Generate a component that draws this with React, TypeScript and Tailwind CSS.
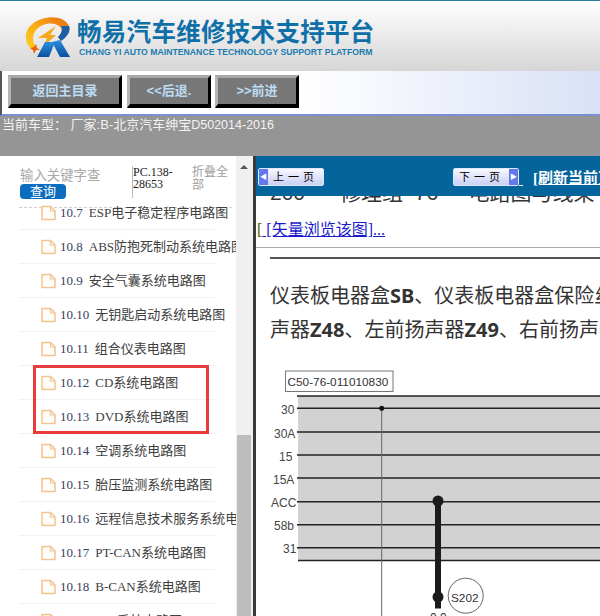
import React from 'react'

const cjk = "font-['Liberation_Sans','Noto_Sans_CJK_SC',sans-serif]"
const serif = "font-['Liberation_Serif','Noto_Sans_CJK_SC',serif]"

const items = [
  ['10.7', 'ESP电子稳定程序电路图'],
  ['10.8', 'ABS防抱死制动系统电路图'],
  ['10.9', '安全气囊系统电路图'],
  ['10.10', '无钥匙启动系统电路图'],
  ['10.11', '组合仪表电路图'],
  ['10.12', 'CD系统电路图'],
  ['10.13', 'DVD系统电路图'],
  ['10.14', '空调系统电路图'],
  ['10.15', '胎压监测系统电路图'],
  ['10.16', '远程信息技术服务系统电路图'],
  ['10.17', 'PT-CAN系统电路图'],
  ['10.18', 'B-CAN系统电路图'],
  ['10.19', 'LIN系统电路图'],
]

const Logo = () => (
  <svg width="50" height="46" viewBox="0 0 50 46" className="shrink-0">
    <defs>
      <linearGradient id="ring" x1="0" y1="1" x2="1" y2="0">
        <stop offset="0" stopColor="#ffd21f" />
        <stop offset="0.5" stopColor="#f9a916" />
        <stop offset="1" stopColor="#ea6a0e" />
      </linearGradient>
      <linearGradient id="blue" x1="0" y1="0" x2="0" y2="1">
        <stop offset="0" stopColor="#2a8fe0" />
        <stop offset="1" stopColor="#0d4f9e" />
      </linearGradient>
    </defs>
    <path d="M7 33C-3 24-1 9 14 3C26-2 40 0 44 9C46 14 42 20 36 24L33 20C37 16 38 12 34 9C27 4 16 7 11 13C7 18 7 25 11 30Z" fill="url(#ring)" />
    <path d="M44 9C46 14 42 20 36 24L33 20C37 16 38 12 36 9Z" fill="#1a5fa8" />
    <path d="M13 21L31 9L25 18L31 18L19 29L22 21Z" fill="#f7a81b" />
    <path d="M5 31L9 30L11 27L12 31L15 33L11 33L9 37L8 33Z" fill="#e8620c" />
    <path d="M12 40L20 25L30 25L24 40Z" fill="url(#blue)" />
    <path d="M27 25L35 23L45 40L35 40Z" fill="url(#blue)" />
  </svg>
)

const NavButton = ({ label, className }: { label: string; className: string }) => (
  <button className={`h-[33px] bg-[#777777] border-[3px] border-t-[#a8a8a8] border-l-[#b4b4b4] border-r-black border-b-[4px] border-b-black text-[13px] font-bold text-[#bcdcf4] ${cjk} ${className}`}>
    {label}
  </button>
)

const Pager = ({ label, next }: { label: string; next?: boolean }) => (
  <div className={`h-[18px] w-[66px] shrink-0 flex items-center rounded-[2px] border border-[#dce8fb] bg-gradient-to-b from-[#f8f8ff] to-[#c9d0f5] ${next ? 'flex-row-reverse' : ''}`}>
    <span className="w-[9px] h-full bg-[#6478ee] text-white text-[7px] leading-[16px] text-center">{next ? '▶' : '◀'}</span>
    <span className={`flex-1 text-center text-[11px] tracking-[4px] text-black ${cjk}`}>{label}</span>
  </div>
)

const FileIcon = () => (
  <svg width="15" height="16" viewBox="0 0 15 16" fill="none" className="shrink-0">
    <path d="M1 1.5H9.5L14 6V14.5H1Z" fill="#fffdf8" stroke="#f2c48f" strokeWidth="1.5" strokeLinejoin="round" />
    <path d="M9.5 1.5V6H14" stroke="#f2c48f" strokeWidth="1.2" />
  </svg>
)

const Row = ({ num, title }: { num: string; title: string }) => (
  <div className={`h-[34px] ml-[19px] w-[196px] shrink-0 flex items-center border-b border-[#f2f2f2] pl-[22px] text-[13px] whitespace-nowrap ${serif}`}>
    <FileIcon />
    <span className="ml-[4px] text-[#38405c]">{num}</span>
    <span className="ml-[6px] text-[#404040]">{title}</span>
  </div>
)

const rails = [
  ['30', 48.3, 21],
  ['30A', 72, 14],
  ['15', 95, 19],
  ['15A', 118, 13],
  ['ACC', 141.7, 11],
  ['58b', 164.7, 14],
  ['31', 187.7, 23],
] as const

const Diagram = () => (
  <svg width="340" height="256" viewBox="0 0 340 256" className="block">
    <rect x="25.5" y="11" width="107.5" height="20.5" fill="white" stroke="#777" />
    <text x="27.5" y="26" fontSize="11.8" fill="#333" fontFamily="Liberation Sans">C50-76-011010830</text>
    <rect x="38" y="36" width="302" height="165" fill="#d2d2d2" />
    <line x1="37" y1="36" x2="340" y2="36" stroke="#222" strokeWidth="1.5" />
    <line x1="38" y1="200.5" x2="340" y2="200.5" stroke="#222" strokeWidth="1.5" />
    {rails.map(([label, y, x]) => (
      <g key={label}>
        <line x1="37" y1={y} x2="340" y2={y} stroke="#222" strokeWidth="1.5" />
        <text x={x} y={y + 5.5} fontSize="12" fill="#444" fontFamily="Liberation Sans">{label}</text>
      </g>
    ))}
    <line x1="121.7" y1="48" x2="121.7" y2="256" stroke="#666" strokeWidth="1" />
    <circle cx="121.7" cy="48.3" r="2.5" fill="#111" />
    <line x1="178" y1="141" x2="178" y2="248.5" stroke="#1c1c1c" strokeWidth="6" />
    <circle cx="178" cy="141" r="5.5" fill="#1c1c1c" />
    <circle cx="178" cy="237" r="5.5" fill="#1c1c1c" />
    <circle cx="205.7" cy="235.7" r="17.5" fill="white" stroke="#666" />
    <text x="191" y="241.5" fontSize="11.8" fill="#333" fontFamily="Liberation Sans">S202</text>
    <text x="170" y="261.5" fontSize="12" fill="#333" fontFamily="Liberation Sans">0.0</text>
  </svg>
)

export default function App() {
  return (
    <div className={`relative w-[600px] h-[616px] overflow-hidden bg-white flex flex-col ${cjk}`}>
      {/* logo strip */}
      <header className="h-[71px] shrink-0 border-t border-[#2b7ea6] bg-gradient-to-b from-white to-[#d6d6d6] flex items-start pl-[25px] pt-[16px]">
        <Logo />
        <div className="ml-[2px] mt-[1px]">
          <div className="text-[24.5px] leading-[29px] font-bold text-[#0f70a8] tracking-[0.3px] whitespace-nowrap">畅易汽车维修技术支持平台</div>
          <div className="text-[8.7px] leading-[11px] font-bold text-[#1a7cb0] whitespace-nowrap ml-[2px]">CHANG YI AUTO MAINTENANCE TECHNOLOGY SUPPORT PLATFORM</div>
        </div>
      </header>

      {/* nav */}
      <nav className="h-[45px] shrink-0 border-b-2 border-[#7d8fd0] border-l-2 border-l-[#555] bg-gradient-to-r from-white from-50% to-[#d9e1f6] flex items-start pl-[6px] pt-[4px]">
        <NavButton label="返回主目录" className="w-[114px]" />
        <NavButton label="<<后退." className="w-[84px] ml-[5px]" />
        <NavButton label=">>前进" className="w-[84px] ml-[4px]" />
      </nav>

      <div className="h-[40px] shrink-0 bg-[#959595] pl-[2px] text-[13px] leading-[18px] text-[#f2f2f2] whitespace-nowrap">当前车型： 厂家:B-北京汽车绅宝<span className="text-[12.5px]">D502014-2016</span></div>

      <main className="flex-1 flex min-h-0">
        {/* sidebar */}
        <aside className="w-[236px] shrink-0 flex flex-col overflow-hidden">
          <div className="h-[52px] shrink-0 flex border-b border-dashed border-[#cfcfcf] mr-[4px] ml-[19px]">
            <div className="w-[113px] pt-[12px] pl-[1px]">
              <div className="text-[13.4px] leading-[16px] text-[#a8a8a8] whitespace-nowrap">输入关键字查</div>
              <div className="w-[46px] h-[15px] rounded-[4px] bg-[#0b6cc0] text-white text-[13px] leading-[15px] text-center">查询</div>
            </div>
            <div className={`w-[60px] h-[32px] mt-[10px] border-l border-[#bbb] text-[12px] leading-[12px] text-[#222] ${serif}`}>PC.138-<br />28653</div>
            <div className="w-[38px] pt-[10px] text-[12px] leading-[13px] text-[#a0a0a0]">折叠全部</div>
          </div>
          <div className="-mt-[12px] overflow-hidden">
            {items.map(([num, title]) => <Row key={num} num={num} title={title} />)}
          </div>
        </aside>

        {/* scrollbar */}
        <div className="w-[17px] shrink-0 bg-[#f0f0f0] pl-[1px] pr-[2px] flex flex-col items-center">
          <div className="mt-[9px] w-0 h-0 border-x-[4px] border-x-transparent border-b-[4px] border-b-[#555]" />
          <div className="mt-auto w-[14px] h-[181px] bg-[#bdbdbd]" />
        </div>

        {/* page */}
        <section className="flex-1 min-w-0 border-l-[3px] border-[#3a3a3a] overflow-hidden flex flex-col">
          <div className="h-[40px] shrink-0 bg-[#04659c] flex items-start pt-[12px] pl-[2px] whitespace-nowrap">
            <Pager label="上一页" />
            <div className="ml-[129px] shrink-0"><Pager label="下一页" next /></div>
            <span className="w-[4px] h-[18px] shrink-0 border-b border-white" />
            <a className={`ml-[10px] shrink-0 text-[15px] leading-[20px] font-bold text-white underline ${serif}`}>[刷新当前页]</a>
          </div>
          <div className="h-[52px] shrink-0 border-b border-[#aaa] overflow-hidden">
            <div className="-mt-[16px] pl-[14px] text-[21px] leading-[26px] text-[#333] whitespace-pre">{'200      修理组  76  -  电路图与线束'}</div>
            <div className={`mt-[14px] pl-[1px] text-[16px] leading-[20px] text-[#1a1acc] ${serif}`}><span className="underline"><span className="text-[#555500]">[</span> [矢量浏览该图]...</span></div>
          </div>
          <div className="mt-[9px] ml-[14px] h-[2px] shrink-0 bg-[#555]" />
          <div className="mt-[20px] ml-[14px] text-[20px] leading-[34px] text-[#333] whitespace-nowrap font-['Noto_Sans','Noto_Sans_CJK_SC',sans-serif]">
            <div>仪表板电器盒<b>SB</b>、仪表板电器盒保险丝</div>
            <div>声器<b>Z48</b>、左前扬声器<b>Z49</b>、右前扬声器</div>
          </div>
          <div className="mt-[13px] ml-[4px]"><Diagram /></div>
        </section>
      </main>

      {/* red highlight drawn over the list */}
      <div className="absolute left-[33px] top-[365px] w-[176px] h-[69px] border-[3px] border-[#e83c3c]" />
    </div>
  )
}
